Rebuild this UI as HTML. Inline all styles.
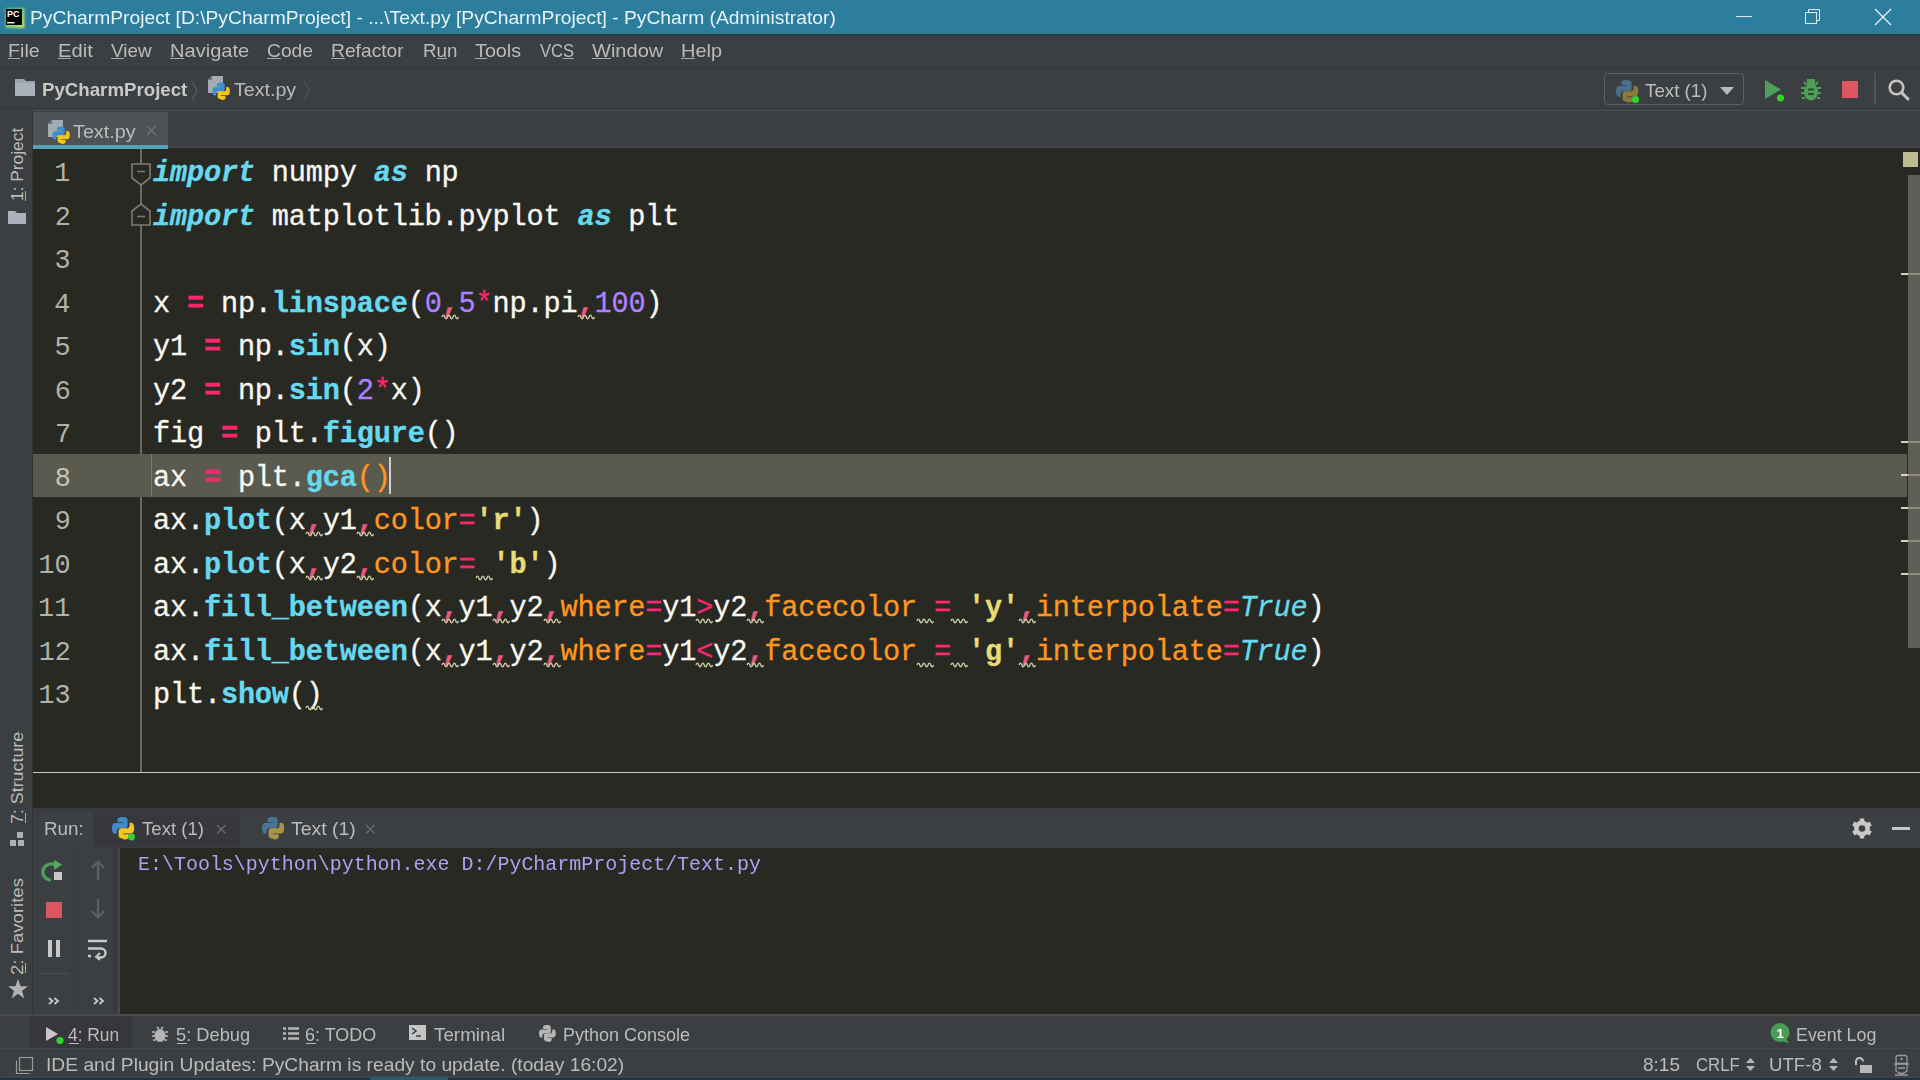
<!DOCTYPE html>
<html><head><meta charset="utf-8">
<style>
*{margin:0;padding:0;box-sizing:border-box}
html,body{width:1920px;height:1080px;overflow:hidden;background:#3c3f41;position:relative}
.a{position:absolute}
.t{white-space:pre;line-height:1;font-family:"Liberation Sans",sans-serif;transform-origin:0 0}
.code{font-family:"Liberation Mono",monospace;font-size:28.6px;color:#f8f8f2;letter-spacing:-0.183px;-webkit-text-stroke:0.3px currentColor}
svg{overflow:visible}
</style></head><body>
<div class="a" style="left:0px;top:0px;width:1920px;height:34px;background:#2d7d9d;"></div>
<div class="a" style="left:0px;top:33px;width:1920px;height:1px;background:#3f7a84;"></div>
<div class="a" style="left:0px;top:34px;width:1920px;height:2px;background:#23414b;"></div>
<div class="a" style="left:0px;top:36px;width:1920px;height:1px;background:#3b4250;"></div>
<div class="a" style="left:0px;top:37px;width:1920px;height:1px;background:#3a3540;"></div>
<div class="a" style="left:0px;top:38px;width:1920px;height:1px;background:#463c46;"></div>
<div class="a" style="left:0px;top:39px;width:1920px;height:1px;background:#3d3a3d;"></div>
<svg class="a" style="left:4px;top:6px" width="22" height="24" viewBox="0 0 22 24"><defs><linearGradient id="pcg" x1="0" y1="0" x2="1" y2="1"><stop offset="0" stop-color="#2fcf8f"/><stop offset="0.45" stop-color="#6fe07a"/><stop offset="1" stop-color="#e8e85a"/></linearGradient><filter id="pcb"><feGaussianBlur stdDeviation="1.1"/></filter></defs><rect x="1.5" y="2" width="19" height="20" fill="url(#pcg)" filter="url(#pcb)" opacity="0.9"/><rect x="2" y="3" width="16" height="16" fill="#000"/><text x="3.1" y="10.6" font-family="Liberation Sans" font-weight="bold" font-size="9" fill="#fff">PC</text><rect x="3" y="16" width="7.5" height="1.4" fill="#fff"/></svg>
<div class="a t" style="left:30.41px;top:9.00px;font-family:'Liberation Sans',sans-serif;font-size:18.5px;font-weight:400;color:#e6f3f9;transform:scaleX(1.0410);">PyCharmProject [D:\PyCharmProject] - ...\Text.py [PyCharmProject] - PyCharm (Administrator)</div>
<div class="a" style="left:1736px;top:16px;width:16px;height:1px;background:#dbe9f0;"></div>
<svg class="a" style="left:1804px;top:8px" width="17" height="17" viewBox="0 0 17 17"><rect x="1.5" y="4.5" width="11" height="11" fill="none" stroke="#dbe9f0" stroke-width="1"/><path d="M4.5 4.5V1.5H15.5V12.5H12.5" fill="none" stroke="#dbe9f0" stroke-width="1"/></svg>
<svg class="a" style="left:1874px;top:8px" width="18" height="18" viewBox="0 0 18 18"><path d="M1 1L17 17M17 1L1 17" stroke="#e6f0f4" stroke-width="1.4"/></svg>
<div class="a" style="left:0px;top:40px;width:1920px;height:27px;background:#3c3f41;"></div>
<div class="a t" style="left:8.38px;top:41.00px;font-family:'Liberation Sans',sans-serif;font-size:19px;font-weight:400;color:#bbbbbb;transform:scaleX(1.0349);">File</div>
<div class="a" style="left:8px;top:58px;width:12px;height:1px;background:#a9a9a9;"></div>
<div class="a t" style="left:58.34px;top:41.00px;font-family:'Liberation Sans',sans-serif;font-size:19px;font-weight:400;color:#bbbbbb;transform:scaleX(1.0607);">Edit</div>
<div class="a" style="left:58px;top:58px;width:13px;height:1px;background:#a9a9a9;"></div>
<div class="a t" style="left:111.16px;top:41.00px;font-family:'Liberation Sans',sans-serif;font-size:19px;font-weight:400;color:#bbbbbb;transform:scaleX(0.9914);">View</div>
<div class="a" style="left:111px;top:58px;width:13px;height:1px;background:#a9a9a9;"></div>
<div class="a t" style="left:169.59px;top:41.00px;font-family:'Liberation Sans',sans-serif;font-size:19px;font-weight:400;color:#bbbbbb;transform:scaleX(1.0561);">Navigate</div>
<div class="a" style="left:170px;top:58px;width:14px;height:1px;background:#a9a9a9;"></div>
<div class="a t" style="left:266.54px;top:41.00px;font-family:'Liberation Sans',sans-serif;font-size:19px;font-weight:400;color:#bbbbbb;transform:scaleX(1.0125);">Code</div>
<div class="a" style="left:267px;top:58px;width:14px;height:1px;background:#a9a9a9;"></div>
<div class="a t" style="left:331.31px;top:41.00px;font-family:'Liberation Sans',sans-serif;font-size:19px;font-weight:400;color:#bbbbbb;transform:scaleX(1.0126);">Refactor</div>
<div class="a" style="left:331px;top:58px;width:14px;height:1px;background:#a9a9a9;"></div>
<div class="a t" style="left:423.05px;top:41.00px;font-family:'Liberation Sans',sans-serif;font-size:19px;font-weight:400;color:#bbbbbb;transform:scaleX(0.9871);">Run</div>
<div class="a" style="left:437px;top:58px;width:10px;height:1px;background:#a9a9a9;"></div>
<div class="a t" style="left:474.56px;top:41.00px;font-family:'Liberation Sans',sans-serif;font-size:19px;font-weight:400;color:#bbbbbb;transform:scaleX(1.0399);">Tools</div>
<div class="a" style="left:475px;top:58px;width:12px;height:1px;background:#a9a9a9;"></div>
<div class="a t" style="left:540.32px;top:41.00px;font-family:'Liberation Sans',sans-serif;font-size:19px;font-weight:400;color:#bbbbbb;transform:scaleX(0.8754);">VCS</div>
<div class="a" style="left:563px;top:58px;width:11px;height:1px;background:#a9a9a9;"></div>
<div class="a t" style="left:592.40px;top:41.00px;font-family:'Liberation Sans',sans-serif;font-size:19px;font-weight:400;color:#bbbbbb;transform:scaleX(1.0549);">Window</div>
<div class="a" style="left:592px;top:58px;width:19px;height:1px;background:#a9a9a9;"></div>
<div class="a t" style="left:680.86px;top:41.00px;font-family:'Liberation Sans',sans-serif;font-size:19px;font-weight:400;color:#bbbbbb;transform:scaleX(1.0485);">Help</div>
<div class="a" style="left:681px;top:58px;width:14px;height:1px;background:#a9a9a9;"></div>
<div class="a" style="left:0px;top:67px;width:1920px;height:43px;background:#3c3f41;"></div>
<div class="a" style="left:0px;top:67px;width:1920px;height:1px;background:#343638;"></div>
<div class="a" style="left:0px;top:107px;width:1920px;height:2px;background:#383a3c;"></div>
<div class="a" style="left:0px;top:110px;width:1920px;height:1px;background:#4b4e51;"></div>
<svg class="a" style="left:15px;top:79px" width="21" height="17" viewBox="0 0 21 17"><path d="M0 0H9L11 2H20V17H0Z" fill="#9aa4ae"/><rect x="0" y="4" width="20" height="13" fill="#a9b2bb"/></svg>
<div class="a t" style="left:41.64px;top:81.00px;font-family:'Liberation Sans',sans-serif;font-size:18.5px;font-weight:700;color:#c9c9c9;transform:scaleX(1.0095);">PyCharmProject</div>
<svg class="a" style="left:191px;top:80px" width="8" height="22" viewBox="0 0 8 22"><path d="M1 1L6 10.5L1 20" fill="none" stroke="#5b5e60" stroke-width="1.3"/></svg>
<svg class="a" style="left:208px;top:76px" width="22" height="24" viewBox="0 0 22 24"><path d="M4 0H15V17H0V4Z" fill="#a3abb3"/><path d="M0 4H4V0Z" fill="#6d7378"/><g transform="translate(4.5 6.5) scale(0.78)"><path d="M11 0C5 0 5.5 2.6 5.5 2.6v2.7h5.6v.8H3.3S0 5.7 0 11.3s2.9 5.4 2.9 5.4h1.7v-2.6s-.1-2.9 2.9-2.9h5.3s2.8 0 2.8-2.7V3.1S16 0 11 0z" fill="#3f8fcf"/><path d="M11.2 22.5c6 0 5.5-2.6 5.5-2.6v-2.7h-5.6v-.8h7.8s3.3.4 3.3-5.2-2.9-5.4-2.9-5.4h-1.7v2.6s.1 2.9-2.9 2.9H9.4s-2.8 0-2.8 2.7v4.4s-.4 3.1 4.6 3.1z" fill="#f2c318"/></g></svg>
<div class="a t" style="left:233.76px;top:81.00px;font-family:'Liberation Sans',sans-serif;font-size:18.5px;font-weight:400;color:#bbbbbb;transform:scaleX(1.0596);">Text.py</div>
<svg class="a" style="left:303px;top:80px" width="8" height="22" viewBox="0 0 8 22"><path d="M1 1L6 10.5L1 20" fill="none" stroke="#4f5254" stroke-width="1.3"/></svg>
<div class="a" style="left:1604px;top:73px;width:140px;height:32px;border:1.5px solid #5d6063;border-radius:4px"></div>
<svg class="a" style="left:1616px;top:80px" width="24" height="24" viewBox="0 0 24 24"><path d="M11 0C5 0 5.5 2.6 5.5 2.6v2.7h5.6v.8H3.3S0 5.7 0 11.3s2.9 5.4 2.9 5.4h1.7v-2.6s-.1-2.9 2.9-2.9h5.3s2.8 0 2.8-2.7V3.1S16 0 11 0z" fill="#4a6f8a"/><path d="M11.2 22.5c6 0 5.5-2.6 5.5-2.6v-2.7h-5.6v-.8h7.8s3.3.4 3.3-5.2-2.9-5.4-2.9-5.4h-1.7v2.6s.1 2.9-2.9 2.9H9.4s-2.8 0-2.8 2.7v4.4s-.4 3.1 4.6 3.1z" fill="#8a7a3a"/><circle cx="19.5" cy="19.5" r="3.6" fill="#2fd42f"/></svg>
<div class="a t" style="left:1645.38px;top:82.00px;font-family:'Liberation Sans',sans-serif;font-size:18.5px;font-weight:400;color:#bbbbbb;transform:scaleX(1.0137);">Text (1)</div>
<svg class="a" style="left:1720px;top:87px" width="14" height="8" viewBox="0 0 14 8"><path d="M0 0H14L7 8Z" fill="#b9b9b9"/></svg>
<svg class="a" style="left:1765px;top:80px" width="20" height="23" viewBox="0 0 20 23"><path d="M0 0L16 9.5L0 19Z" fill="#4f9f59"/><circle cx="15.5" cy="18" r="3.5" fill="#2fd42f"/></svg>
<svg class="a" style="left:1801px;top:80px" width="20" height="21" viewBox="0 0 20 21"><path d="M7 0h6v3h-6z M3 2l3 3 M17 2l-3 3" stroke="#4f9f59" stroke-width="2" fill="#4f9f59"/><ellipse cx="10" cy="12" rx="7" ry="8.5" fill="#4f9f59"/><path d="M0 8H4M16 8H20M0 13H3M17 13H20M1 18H4M16 18H19" stroke="#4f9f59" stroke-width="2"/><path d="M7 9.5H13M7 14H13" stroke="#2d4a31" stroke-width="2"/></svg>
<div class="a" style="left:1842px;top:81px;width:16px;height:17px;background:#db5860;"></div>
<div class="a" style="left:1874px;top:73px;width:2px;height:31px;background:#505356;"></div>
<svg class="a" style="left:1888px;top:79px" width="22" height="22" viewBox="0 0 22 22"><circle cx="8.5" cy="8.5" r="6.8" fill="none" stroke="#c5c5c5" stroke-width="2.6"/><path d="M13.5 13.5L20 20" stroke="#c5c5c5" stroke-width="3" stroke-linecap="round"/></svg>
<div class="a" style="left:0px;top:110px;width:32px;height:904px;background:#3c3f41;"></div>
<div class="a" style="left:32px;top:110px;width:1px;height:904px;background:#313335;"></div>
<div class="a t" style="left:9.45px;top:201.10px;font-size:17px;color:#bbbbbb;transform-origin:0 0;transform:rotate(-90deg) scaleX(1.0196)">1: Project</div>
<div class="a" style="left:25px;top:191px;width:1px;height:10px;background:#a9a9a9;"></div>
<svg class="a" style="left:8px;top:211px" width="18" height="13" viewBox="0 0 18 13"><path d="M0 0H7L9 2H18V13H0Z" fill="#a9b2bb"/></svg>
<div class="a t" style="left:9.45px;top:824.39px;font-size:17px;color:#bbbbbb;transform-origin:0 0;transform:rotate(-90deg) scaleX(1.0490)">7: Structure</div>
<div class="a" style="left:25px;top:813px;width:1px;height:10px;background:#a9a9a9;"></div>
<svg class="a" style="left:10px;top:832px" width="14" height="14" viewBox="0 0 14 14"><rect x="7" y="0" width="6" height="6" fill="#b0b0b0"/><rect x="0" y="8" width="6" height="6" fill="#b0b0b0"/><rect x="8" y="8" width="6" height="6" fill="#b0b0b0"/></svg>
<div class="a t" style="left:9.45px;top:974.93px;font-size:17px;color:#bbbbbb;transform-origin:0 0;transform:rotate(-90deg) scaleX(1.0918)">2: Favorites</div>
<div class="a" style="left:25px;top:963px;width:1px;height:10px;background:#a9a9a9;"></div>
<svg class="a" style="left:8px;top:979px" width="20" height="20" viewBox="0 0 20 20"><path d="M10 0L12.6 7.2H20L14 11.8L16.2 19.5L10 14.8L3.8 19.5L6 11.8L0 7.2H7.4Z" fill="#b3b3b3"/></svg>
<div class="a" style="left:33px;top:111px;width:1887px;height:38px;background:#3c3f41;"></div>
<div class="a" style="left:33px;top:112px;width:135px;height:33px;background:#4e5254;"></div>
<div class="a" style="left:33px;top:145px;width:135px;height:4px;background:#52a3b6;"></div>
<div class="a" style="left:168px;top:146px;width:1752px;height:2px;background:#464646;"></div>
<div class="a" style="left:168px;top:148px;width:1752px;height:1px;background:#2c2c2c;"></div>
<svg class="a" style="left:48px;top:120px" width="22" height="24" viewBox="0 0 22 24"><path d="M4 0H15V17H0V4Z" fill="#a3abb3"/><path d="M0 4H4V0Z" fill="#6d7378"/><g transform="translate(4.5 6.5) scale(0.78)"><path d="M11 0C5 0 5.5 2.6 5.5 2.6v2.7h5.6v.8H3.3S0 5.7 0 11.3s2.9 5.4 2.9 5.4h1.7v-2.6s-.1-2.9 2.9-2.9h5.3s2.8 0 2.8-2.7V3.1S16 0 11 0z" fill="#3f8fcf"/><path d="M11.2 22.5c6 0 5.5-2.6 5.5-2.6v-2.7h-5.6v-.8h7.8s3.3.4 3.3-5.2-2.9-5.4-2.9-5.4h-1.7v2.6s.1 2.9-2.9 2.9H9.4s-2.8 0-2.8 2.7v4.4s-.4 3.1 4.6 3.1z" fill="#f2c318"/></g></svg>
<div class="a t" style="left:72.96px;top:123.00px;font-family:'Liberation Sans',sans-serif;font-size:18.5px;font-weight:400;color:#bbbbbb;transform:scaleX(1.0682);">Text.py</div>
<svg class="a" style="left:146px;top:125px" width="11" height="11" viewBox="0 0 11 11"><path d="M1 1L10 10M10 1L1 10" stroke="#707375" stroke-width="1.4"/></svg>
<div class="a" style="left:33px;top:149px;width:1887px;height:623px;background:#282923;"></div>
<div class="a" style="left:33px;top:454px;width:1874px;height:43px;background:#5a5a4f;"></div>
<div class="a" style="left:140px;top:149px;width:2px;height:305px;background:#6b6a62;"></div>
<div class="a" style="left:140px;top:497px;width:2px;height:275px;background:#6b6a62;"></div>
<div class="a" style="left:151px;top:454px;width:1px;height:43px;background:#7a7a6e;"></div>
<div class="a" style="left:1903px;top:152px;width:15px;height:15px;background:#bdbb8f;"></div>
<div class="a" style="left:1908px;top:175px;width:12px;height:473px;background:#5f5f58;"></div>
<div class="a" style="left:1901px;top:273px;width:7px;height:2px;background:#d6d4bc;"></div>
<div class="a" style="left:1908px;top:273px;width:12px;height:2px;background:#8c8b7c;"></div>
<div class="a" style="left:1901px;top:441px;width:7px;height:2px;background:#d6d4bc;"></div>
<div class="a" style="left:1908px;top:441px;width:12px;height:2px;background:#8c8b7c;"></div>
<div class="a" style="left:1901px;top:474px;width:7px;height:2px;background:#d6d4bc;"></div>
<div class="a" style="left:1908px;top:474px;width:12px;height:2px;background:#8c8b7c;"></div>
<div class="a" style="left:1901px;top:507px;width:7px;height:2px;background:#d6d4bc;"></div>
<div class="a" style="left:1908px;top:507px;width:12px;height:2px;background:#8c8b7c;"></div>
<div class="a" style="left:1901px;top:540px;width:7px;height:2px;background:#d6d4bc;"></div>
<div class="a" style="left:1908px;top:540px;width:12px;height:2px;background:#8c8b7c;"></div>
<div class="a" style="left:1901px;top:573px;width:7px;height:2px;background:#d6d4bc;"></div>
<div class="a" style="left:1908px;top:573px;width:12px;height:2px;background:#8c8b7c;"></div>
<svg class="a" style="left:131px;top:163px" width="20" height="24" viewBox="0 0 20 24"><path d="M1 1H19V15L10 22L1 15Z" fill="#282923" stroke="#7c7a72" stroke-width="1.6"/><path d="M6 8.5H14" stroke="#7c7a72" stroke-width="1.6"/></svg>
<svg class="a" style="left:131px;top:203px" width="20" height="24" viewBox="0 0 20 24"><path d="M1 8L10 1L19 8V22H1Z" fill="#282923" stroke="#7c7a72" stroke-width="1.6"/><path d="M6 13.5H14" stroke="#7c7a72" stroke-width="1.6"/></svg>
<div class="a t" style="left:54.19px;top:161.00px;font-family:'Liberation Mono',monospace;font-size:26.8px;font-weight:400;color:#b2b2aa;">1</div>
<div class="a t" style="left:54.80px;top:205.00px;font-family:'Liberation Mono',monospace;font-size:26.8px;font-weight:400;color:#b2b2aa;">2</div>
<div class="a t" style="left:54.59px;top:248.00px;font-family:'Liberation Mono',monospace;font-size:26.8px;font-weight:400;color:#b2b2aa;">3</div>
<div class="a t" style="left:54.26px;top:292.00px;font-family:'Liberation Mono',monospace;font-size:26.8px;font-weight:400;color:#b2b2aa;">4</div>
<div class="a t" style="left:54.59px;top:335.00px;font-family:'Liberation Mono',monospace;font-size:26.8px;font-weight:400;color:#b2b2aa;">5</div>
<div class="a t" style="left:54.66px;top:379.00px;font-family:'Liberation Mono',monospace;font-size:26.8px;font-weight:400;color:#b2b2aa;">6</div>
<div class="a t" style="left:55.00px;top:422.00px;font-family:'Liberation Mono',monospace;font-size:26.8px;font-weight:400;color:#b2b2aa;">7</div>
<div class="a t" style="left:54.66px;top:466.00px;font-family:'Liberation Mono',monospace;font-size:26.8px;font-weight:400;color:#c6c6ba;">8</div>
<div class="a t" style="left:54.80px;top:509.00px;font-family:'Liberation Mono',monospace;font-size:26.8px;font-weight:400;color:#b2b2aa;">9</div>
<div class="a t" style="left:38.52px;top:553.00px;font-family:'Liberation Mono',monospace;font-size:26.8px;font-weight:400;color:#b2b2aa;">10</div>
<div class="a t" style="left:38.11px;top:596.00px;font-family:'Liberation Mono',monospace;font-size:26.8px;font-weight:400;color:#b2b2aa;">11</div>
<div class="a t" style="left:38.72px;top:640.00px;font-family:'Liberation Mono',monospace;font-size:26.8px;font-weight:400;color:#b2b2aa;">12</div>
<div class="a t" style="left:38.52px;top:683.00px;font-family:'Liberation Mono',monospace;font-size:26.8px;font-weight:400;color:#b2b2aa;">13</div>
<div class="a t code" style="left:153px;top:160.00px"><span style="color:#66d9ef;font-weight:700;font-style:italic;">import</span> numpy <span style="color:#66d9ef;font-weight:700;font-style:italic;">as</span> np</div>
<div class="a t code" style="left:153px;top:204.00px"><span style="color:#66d9ef;font-weight:700;font-style:italic;">import</span> matplotlib.pyplot <span style="color:#66d9ef;font-weight:700;font-style:italic;">as</span> plt</div>
<div class="a t code" style="left:153px;top:291.00px">x <span style="color:#f92672;font-weight:700;">=</span> np.<span style="color:#66d9ef;font-weight:700;">linspace</span>(<span style="color:#ae81ff;">0</span><span style="color:#e9587f;font-weight:700;">,</span><span style="color:#ae81ff;">5</span><span style="color:#f92672;">*</span>np.pi<span style="color:#e9587f;font-weight:700;">,</span><span style="color:#ae81ff;">100</span>)</div>
<div class="a t code" style="left:153px;top:334.00px">y1 <span style="color:#f92672;font-weight:700;">=</span> np.<span style="color:#66d9ef;font-weight:700;">sin</span>(x)</div>
<div class="a t code" style="left:153px;top:378.00px">y2 <span style="color:#f92672;font-weight:700;">=</span> np.<span style="color:#66d9ef;font-weight:700;">sin</span>(<span style="color:#ae81ff;">2</span><span style="color:#f92672;">*</span>x)</div>
<div class="a t code" style="left:153px;top:421.00px">fig <span style="color:#f92672;font-weight:700;">=</span> plt.<span style="color:#66d9ef;font-weight:700;">figure</span>()</div>
<div class="a t code" style="left:153px;top:465.00px">ax <span style="color:#f92672;font-weight:700;">=</span> plt.<span style="color:#66d9ef;font-weight:700;">gca</span><span style="color:#fd971f;">()</span></div>
<div class="a t code" style="left:153px;top:508.00px">ax.<span style="color:#66d9ef;font-weight:700;">plot</span>(x<span style="color:#e9587f;font-weight:700;">,</span>y1<span style="color:#e9587f;font-weight:700;">,</span><span style="color:#fd971f;">color</span><span style="color:#f92672;">=</span><span style="color:#e6db74;font-weight:700;">&#x27;r&#x27;</span>)</div>
<div class="a t code" style="left:153px;top:552.00px">ax.<span style="color:#66d9ef;font-weight:700;">plot</span>(x<span style="color:#e9587f;font-weight:700;">,</span>y2<span style="color:#e9587f;font-weight:700;">,</span><span style="color:#fd971f;">color</span><span style="color:#f92672;">=</span> <span style="color:#e6db74;font-weight:700;">&#x27;b&#x27;</span>)</div>
<div class="a t code" style="left:153px;top:595.00px">ax.<span style="color:#66d9ef;font-weight:700;">fill_between</span>(x<span style="color:#e9587f;font-weight:700;">,</span>y1<span style="color:#e9587f;font-weight:700;">,</span>y2<span style="color:#e9587f;font-weight:700;">,</span><span style="color:#fd971f;">where</span><span style="color:#f92672;">=</span>y1<span style="color:#f92672;">&gt;</span>y2<span style="color:#e9587f;font-weight:700;">,</span><span style="color:#fd971f;">facecolor</span> <span style="color:#f92672;">=</span> <span style="color:#e6db74;font-weight:700;">&#x27;y&#x27;</span><span style="color:#e9587f;font-weight:700;">,</span><span style="color:#fd971f;">interpolate</span><span style="color:#f92672;">=</span><span style="color:#66d9ef;font-style:italic;">True</span>)</div>
<div class="a t code" style="left:153px;top:639.00px">ax.<span style="color:#66d9ef;font-weight:700;">fill_between</span>(x<span style="color:#e9587f;font-weight:700;">,</span>y1<span style="color:#e9587f;font-weight:700;">,</span>y2<span style="color:#e9587f;font-weight:700;">,</span><span style="color:#fd971f;">where</span><span style="color:#f92672;">=</span>y1<span style="color:#f92672;">&lt;</span>y2<span style="color:#e9587f;font-weight:700;">,</span><span style="color:#fd971f;">facecolor</span> <span style="color:#f92672;">=</span> <span style="color:#e6db74;font-weight:700;">&#x27;g&#x27;</span><span style="color:#e9587f;font-weight:700;">,</span><span style="color:#fd971f;">interpolate</span><span style="color:#f92672;">=</span><span style="color:#66d9ef;font-style:italic;">True</span>)</div>
<div class="a t code" style="left:153px;top:682.00px">plt.<span style="color:#66d9ef;font-weight:700;">show</span>()</div>
<svg class="a" style="left:442px;top:314px" width="18" height="6" viewBox="0 0 18 6"><path d="M0 3 Q1.38 -0.8 2.75 3 Q4.12 6.8 5.50 3 Q6.88 -0.8 8.25 3 Q9.62 6.8 11.00 3 Q12.38 -0.8 13.75 3 Q15.12 6.8 16.50 3" fill="none" stroke="#cfcca8" stroke-width="1.4"/></svg>
<svg class="a" style="left:578px;top:314px" width="18" height="6" viewBox="0 0 18 6"><path d="M0 3 Q1.38 -0.8 2.75 3 Q4.12 6.8 5.50 3 Q6.88 -0.8 8.25 3 Q9.62 6.8 11.00 3 Q12.38 -0.8 13.75 3 Q15.12 6.8 16.50 3" fill="none" stroke="#cfcca8" stroke-width="1.4"/></svg>
<svg class="a" style="left:306px;top:531px" width="18" height="6" viewBox="0 0 18 6"><path d="M0 3 Q1.38 -0.8 2.75 3 Q4.12 6.8 5.50 3 Q6.88 -0.8 8.25 3 Q9.62 6.8 11.00 3 Q12.38 -0.8 13.75 3 Q15.12 6.8 16.50 3" fill="none" stroke="#cfcca8" stroke-width="1.4"/></svg>
<svg class="a" style="left:357px;top:531px" width="18" height="6" viewBox="0 0 18 6"><path d="M0 3 Q1.38 -0.8 2.75 3 Q4.12 6.8 5.50 3 Q6.88 -0.8 8.25 3 Q9.62 6.8 11.00 3 Q12.38 -0.8 13.75 3 Q15.12 6.8 16.50 3" fill="none" stroke="#cfcca8" stroke-width="1.4"/></svg>
<svg class="a" style="left:306px;top:575px" width="18" height="6" viewBox="0 0 18 6"><path d="M0 3 Q1.38 -0.8 2.75 3 Q4.12 6.8 5.50 3 Q6.88 -0.8 8.25 3 Q9.62 6.8 11.00 3 Q12.38 -0.8 13.75 3 Q15.12 6.8 16.50 3" fill="none" stroke="#cfcca8" stroke-width="1.4"/></svg>
<svg class="a" style="left:357px;top:575px" width="18" height="6" viewBox="0 0 18 6"><path d="M0 3 Q1.38 -0.8 2.75 3 Q4.12 6.8 5.50 3 Q6.88 -0.8 8.25 3 Q9.62 6.8 11.00 3 Q12.38 -0.8 13.75 3 Q15.12 6.8 16.50 3" fill="none" stroke="#cfcca8" stroke-width="1.4"/></svg>
<svg class="a" style="left:442px;top:618px" width="18" height="6" viewBox="0 0 18 6"><path d="M0 3 Q1.38 -0.8 2.75 3 Q4.12 6.8 5.50 3 Q6.88 -0.8 8.25 3 Q9.62 6.8 11.00 3 Q12.38 -0.8 13.75 3 Q15.12 6.8 16.50 3" fill="none" stroke="#cfcca8" stroke-width="1.4"/></svg>
<svg class="a" style="left:493px;top:618px" width="18" height="6" viewBox="0 0 18 6"><path d="M0 3 Q1.38 -0.8 2.75 3 Q4.12 6.8 5.50 3 Q6.88 -0.8 8.25 3 Q9.62 6.8 11.00 3 Q12.38 -0.8 13.75 3 Q15.12 6.8 16.50 3" fill="none" stroke="#cfcca8" stroke-width="1.4"/></svg>
<svg class="a" style="left:544px;top:618px" width="18" height="6" viewBox="0 0 18 6"><path d="M0 3 Q1.38 -0.8 2.75 3 Q4.12 6.8 5.50 3 Q6.88 -0.8 8.25 3 Q9.62 6.8 11.00 3 Q12.38 -0.8 13.75 3 Q15.12 6.8 16.50 3" fill="none" stroke="#cfcca8" stroke-width="1.4"/></svg>
<svg class="a" style="left:747px;top:618px" width="18" height="6" viewBox="0 0 18 6"><path d="M0 3 Q1.38 -0.8 2.75 3 Q4.12 6.8 5.50 3 Q6.88 -0.8 8.25 3 Q9.62 6.8 11.00 3 Q12.38 -0.8 13.75 3 Q15.12 6.8 16.50 3" fill="none" stroke="#cfcca8" stroke-width="1.4"/></svg>
<svg class="a" style="left:1019px;top:618px" width="18" height="6" viewBox="0 0 18 6"><path d="M0 3 Q1.38 -0.8 2.75 3 Q4.12 6.8 5.50 3 Q6.88 -0.8 8.25 3 Q9.62 6.8 11.00 3 Q12.38 -0.8 13.75 3 Q15.12 6.8 16.50 3" fill="none" stroke="#cfcca8" stroke-width="1.4"/></svg>
<svg class="a" style="left:442px;top:662px" width="18" height="6" viewBox="0 0 18 6"><path d="M0 3 Q1.38 -0.8 2.75 3 Q4.12 6.8 5.50 3 Q6.88 -0.8 8.25 3 Q9.62 6.8 11.00 3 Q12.38 -0.8 13.75 3 Q15.12 6.8 16.50 3" fill="none" stroke="#cfcca8" stroke-width="1.4"/></svg>
<svg class="a" style="left:493px;top:662px" width="18" height="6" viewBox="0 0 18 6"><path d="M0 3 Q1.38 -0.8 2.75 3 Q4.12 6.8 5.50 3 Q6.88 -0.8 8.25 3 Q9.62 6.8 11.00 3 Q12.38 -0.8 13.75 3 Q15.12 6.8 16.50 3" fill="none" stroke="#cfcca8" stroke-width="1.4"/></svg>
<svg class="a" style="left:544px;top:662px" width="18" height="6" viewBox="0 0 18 6"><path d="M0 3 Q1.38 -0.8 2.75 3 Q4.12 6.8 5.50 3 Q6.88 -0.8 8.25 3 Q9.62 6.8 11.00 3 Q12.38 -0.8 13.75 3 Q15.12 6.8 16.50 3" fill="none" stroke="#cfcca8" stroke-width="1.4"/></svg>
<svg class="a" style="left:747px;top:662px" width="18" height="6" viewBox="0 0 18 6"><path d="M0 3 Q1.38 -0.8 2.75 3 Q4.12 6.8 5.50 3 Q6.88 -0.8 8.25 3 Q9.62 6.8 11.00 3 Q12.38 -0.8 13.75 3 Q15.12 6.8 16.50 3" fill="none" stroke="#cfcca8" stroke-width="1.4"/></svg>
<svg class="a" style="left:1019px;top:662px" width="18" height="6" viewBox="0 0 18 6"><path d="M0 3 Q1.38 -0.8 2.75 3 Q4.12 6.8 5.50 3 Q6.88 -0.8 8.25 3 Q9.62 6.8 11.00 3 Q12.38 -0.8 13.75 3 Q15.12 6.8 16.50 3" fill="none" stroke="#cfcca8" stroke-width="1.4"/></svg>
<svg class="a" style="left:476px;top:575px" width="18" height="6" viewBox="0 0 18 6"><path d="M0 3 Q1.38 -0.8 2.75 3 Q4.12 6.8 5.50 3 Q6.88 -0.8 8.25 3 Q9.62 6.8 11.00 3 Q12.38 -0.8 13.75 3 Q15.12 6.8 16.50 3" fill="none" stroke="#cfcca8" stroke-width="1.4"/></svg>
<svg class="a" style="left:696px;top:618px" width="18" height="6" viewBox="0 0 18 6"><path d="M0 3 Q1.38 -0.8 2.75 3 Q4.12 6.8 5.50 3 Q6.88 -0.8 8.25 3 Q9.62 6.8 11.00 3 Q12.38 -0.8 13.75 3 Q15.12 6.8 16.50 3" fill="none" stroke="#cfcca8" stroke-width="1.4"/></svg>
<svg class="a" style="left:917px;top:618px" width="18" height="6" viewBox="0 0 18 6"><path d="M0 3 Q1.38 -0.8 2.75 3 Q4.12 6.8 5.50 3 Q6.88 -0.8 8.25 3 Q9.62 6.8 11.00 3 Q12.38 -0.8 13.75 3 Q15.12 6.8 16.50 3" fill="none" stroke="#cfcca8" stroke-width="1.4"/></svg>
<svg class="a" style="left:951px;top:618px" width="18" height="6" viewBox="0 0 18 6"><path d="M0 3 Q1.38 -0.8 2.75 3 Q4.12 6.8 5.50 3 Q6.88 -0.8 8.25 3 Q9.62 6.8 11.00 3 Q12.38 -0.8 13.75 3 Q15.12 6.8 16.50 3" fill="none" stroke="#cfcca8" stroke-width="1.4"/></svg>
<svg class="a" style="left:696px;top:662px" width="18" height="6" viewBox="0 0 18 6"><path d="M0 3 Q1.38 -0.8 2.75 3 Q4.12 6.8 5.50 3 Q6.88 -0.8 8.25 3 Q9.62 6.8 11.00 3 Q12.38 -0.8 13.75 3 Q15.12 6.8 16.50 3" fill="none" stroke="#cfcca8" stroke-width="1.4"/></svg>
<svg class="a" style="left:917px;top:662px" width="18" height="6" viewBox="0 0 18 6"><path d="M0 3 Q1.38 -0.8 2.75 3 Q4.12 6.8 5.50 3 Q6.88 -0.8 8.25 3 Q9.62 6.8 11.00 3 Q12.38 -0.8 13.75 3 Q15.12 6.8 16.50 3" fill="none" stroke="#cfcca8" stroke-width="1.4"/></svg>
<svg class="a" style="left:951px;top:662px" width="18" height="6" viewBox="0 0 18 6"><path d="M0 3 Q1.38 -0.8 2.75 3 Q4.12 6.8 5.50 3 Q6.88 -0.8 8.25 3 Q9.62 6.8 11.00 3 Q12.38 -0.8 13.75 3 Q15.12 6.8 16.50 3" fill="none" stroke="#cfcca8" stroke-width="1.4"/></svg>
<svg class="a" style="left:306px;top:705px" width="18" height="6" viewBox="0 0 18 6"><path d="M0 3 Q1.38 -0.8 2.75 3 Q4.12 6.8 5.50 3 Q6.88 -0.8 8.25 3 Q9.62 6.8 11.00 3 Q12.38 -0.8 13.75 3 Q15.12 6.8 16.50 3" fill="none" stroke="#cfcca8" stroke-width="1.4"/></svg>
<div class="a" style="left:389px;top:457px;width:2px;height:37px;background:#d0d0c8;"></div>
<div class="a" style="left:33px;top:772px;width:1887px;height:1px;background:#c9c9c0;"></div>
<div class="a" style="left:33px;top:773px;width:1887px;height:35px;background:#282923;"></div>
<div class="a" style="left:33px;top:808px;width:1887px;height:40px;background:#3c3f41;"></div>
<div class="a" style="left:33px;top:808px;width:1887px;height:7px;background:#393b3e;"></div>
<div class="a" style="left:39px;top:813px;width:54px;height:33px;background:#3e4143;"></div>
<div class="a" style="left:94px;top:815px;width:146px;height:32px;background:#36383b;"></div>
<div class="a t" style="left:44.05px;top:820.00px;font-family:'Liberation Sans',sans-serif;font-size:18.5px;font-weight:400;color:#bbbbbb;transform:scaleX(1.0142);">Run:</div>
<svg class="a" style="left:112px;top:817px" width="24" height="24" viewBox="0 0 24 24"><path d="M11 0C5 0 5.5 2.6 5.5 2.6v2.7h5.6v.8H3.3S0 5.7 0 11.3s2.9 5.4 2.9 5.4h1.7v-2.6s-.1-2.9 2.9-2.9h5.3s2.8 0 2.8-2.7V3.1S16 0 11 0z" fill="#3f8bc9"/><path d="M11.2 22.5c6 0 5.5-2.6 5.5-2.6v-2.7h-5.6v-.8h7.8s3.3.4 3.3-5.2-2.9-5.4-2.9-5.4h-1.7v2.6s.1 2.9-2.9 2.9H9.4s-2.8 0-2.8 2.7v4.4s-.4 3.1 4.6 3.1z" fill="#f3c623"/><circle cx="19.5" cy="20" r="3.4" fill="#2fd42f"/></svg>
<div class="a t" style="left:142.08px;top:820.00px;font-family:'Liberation Sans',sans-serif;font-size:18.5px;font-weight:400;color:#bbbbbb;transform:scaleX(1.0053);">Text (1)</div>
<svg class="a" style="left:216px;top:824px" width="11" height="11" viewBox="0 0 11 11"><path d="M1 1L9.5 9.5M9.5 1L1 9.5" stroke="#6c6f71" stroke-width="1.3"/></svg>
<svg class="a" style="left:262px;top:817px" width="24" height="24" viewBox="0 0 24 24"><path d="M11 0C5 0 5.5 2.6 5.5 2.6v2.7h5.6v.8H3.3S0 5.7 0 11.3s2.9 5.4 2.9 5.4h1.7v-2.6s-.1-2.9 2.9-2.9h5.3s2.8 0 2.8-2.7V3.1S16 0 11 0z" fill="#4a7396"/><path d="M11.2 22.5c6 0 5.5-2.6 5.5-2.6v-2.7h-5.6v-.8h7.8s3.3.4 3.3-5.2-2.9-5.4-2.9-5.4h-1.7v2.6s.1 2.9-2.9 2.9H9.4s-2.8 0-2.8 2.7v4.4s-.4 3.1 4.6 3.1z" fill="#a89545"/></svg>
<div class="a t" style="left:290.56px;top:820.00px;font-family:'Liberation Sans',sans-serif;font-size:18.5px;font-weight:400;color:#bbbbbb;transform:scaleX(1.0486);">Text (1)</div>
<svg class="a" style="left:365px;top:824px" width="11" height="11" viewBox="0 0 11 11"><path d="M1 1L9.5 9.5M9.5 1L1 9.5" stroke="#6c6f71" stroke-width="1.3"/></svg>
<svg class="a" style="left:1852px;top:818px" width="20" height="21" viewBox="0 0 20 21"><g transform="translate(10 10.5)"><circle r="5.6" fill="none" stroke="#c8c8c8" stroke-width="4.6"/><rect x="-2.2" y="-10" width="4.4" height="5" fill="#c8c8c8" transform="rotate(0)"/><rect x="-2.2" y="-10" width="4.4" height="5" fill="#c8c8c8" transform="rotate(60)"/><rect x="-2.2" y="-10" width="4.4" height="5" fill="#c8c8c8" transform="rotate(120)"/><rect x="-2.2" y="-10" width="4.4" height="5" fill="#c8c8c8" transform="rotate(180)"/><rect x="-2.2" y="-10" width="4.4" height="5" fill="#c8c8c8" transform="rotate(240)"/><rect x="-2.2" y="-10" width="4.4" height="5" fill="#c8c8c8" transform="rotate(300)"/></g></svg>
<div class="a" style="left:1892px;top:827px;width:18px;height:3px;background:#c5c5c5;"></div>
<div class="a" style="left:33px;top:848px;width:87px;height:166px;background:#3c3f41;"></div>
<div class="a" style="left:77px;top:848px;width:1px;height:166px;background:#393b3d;"></div>
<div class="a" style="left:113px;top:848px;width:4px;height:166px;background:#37393b;"></div>
<div class="a" style="left:119px;top:848px;width:1px;height:166px;background:#4a4d4f;"></div>
<div class="a" style="left:120px;top:848px;width:1800px;height:166px;background:#282923;"></div>
<div class="a t" style="left:138.40px;top:855.00px;font-family:'Liberation Mono',monospace;font-size:19.9px;font-weight:400;color:#aba2f2;transform:scaleX(1.0037);">E:\Tools\python\python.exe D:/PyCharmProject/Text.py</div>
<svg class="a" style="left:42px;top:859px" width="22" height="22" viewBox="0 0 22 22"><path d="M9 21A8 8 0 1 1 13.5 6.5" fill="none" stroke="#4f9f59" stroke-width="3.2"/><path d="M12 1L20 5.5L12 11Z" fill="#59a869"/><rect x="12" y="13" width="8" height="8" fill="#c8c8c8"/></svg>
<div class="a" style="left:46px;top:902px;width:16px;height:16px;background:#db5860;"></div>
<svg class="a" style="left:91px;top:860px" width="14" height="20" viewBox="0 0 14 20"><path d="M7 20V3M1 8L7 1.5L13 8" fill="none" stroke="#5b5f62" stroke-width="2.5"/></svg>
<svg class="a" style="left:91px;top:899px" width="14" height="20" viewBox="0 0 14 20"><path d="M7 0V17M1 12L7 18.5L13 12" fill="none" stroke="#5b5f62" stroke-width="2.5"/></svg>
<div class="a" style="left:48px;top:940px;width:4px;height:17px;background:#c8c8c8;"></div>
<div class="a" style="left:56px;top:940px;width:4px;height:17px;background:#c8c8c8;"></div>
<div class="a" style="left:39px;top:973px;width:30px;height:1px;background:#4d5052;"></div>
<svg class="a" style="left:48px;top:997px" width="12" height="8" viewBox="0 0 12 8"><path d="M1 1L4.5 4L1 7M6.5 1L10 4L6.5 7" fill="none" stroke="#c8c8c8" stroke-width="1.8"/></svg>
<svg class="a" style="left:88px;top:939px" width="20" height="22" viewBox="0 0 20 22"><path d="M0 2H19M0 9.5H13a4.5 4.5 0 0 1 0 9H10M0 17H3" fill="none" stroke="#c8c8c8" stroke-width="2.4"/><path d="M12 14L8 18L12 21" fill="none" stroke="#c8c8c8" stroke-width="2"/></svg>
<svg class="a" style="left:93px;top:997px" width="12" height="8" viewBox="0 0 12 8"><path d="M1 1L4.5 4L1 7M6.5 1L10 4L6.5 7" fill="none" stroke="#c8c8c8" stroke-width="1.8"/></svg>
<div class="a" style="left:0px;top:1014px;width:1920px;height:34px;background:#3c3f41;"></div>
<div class="a" style="left:0px;top:1014px;width:1920px;height:2px;background:#4a4a4b;"></div>
<div class="a" style="left:0px;top:1016px;width:1920px;height:4px;background:#3e3d42;"></div>
<div class="a" style="left:29px;top:1016px;width:103px;height:32px;background:#35373a;"></div>
<svg class="a" style="left:46px;top:1027px" width="19" height="18" viewBox="0 0 19 18"><path d="M0 0L12 7L0 14Z" fill="#cfc3cb"/><circle cx="14" cy="13.5" r="3.6" fill="#2fd42f"/></svg>
<div class="a t" style="left:68.11px;top:1026.00px;font-family:'Liberation Sans',sans-serif;font-size:18.5px;font-weight:400;color:#bbbbbb;transform:scaleX(0.9393);">4: Run</div>
<div class="a" style="left:69px;top:1043px;width:10px;height:1px;background:#bbbbbb;"></div>
<svg class="a" style="left:152px;top:1027px" width="16" height="16" viewBox="0 0 16 16"><ellipse cx="8" cy="8.5" rx="5.5" ry="6.5" fill="#b5b5b5"/><path d="M0 5H3M13 5H16M0 9H3M13 9H16M1 13H4M12 13H15M5 0L7 2M11 0L9 2" stroke="#b5b5b5" stroke-width="1.6"/></svg>
<div class="a t" style="left:175.57px;top:1026.00px;font-family:'Liberation Sans',sans-serif;font-size:18.5px;font-weight:400;color:#bbbbbb;transform:scaleX(0.9881);">5: Debug</div>
<div class="a" style="left:177px;top:1043px;width:10px;height:1px;background:#bbbbbb;"></div>
<svg class="a" style="left:283px;top:1027px" width="16" height="13" viewBox="0 0 16 13"><path d="M0 1.5H3M5 1.5H16M0 6.5H3M5 6.5H16M0 11.5H3M5 11.5H16" stroke="#b5b5b5" stroke-width="2.4"/></svg>
<div class="a t" style="left:304.90px;top:1026.00px;font-family:'Liberation Sans',sans-serif;font-size:18.5px;font-weight:400;color:#bbbbbb;transform:scaleX(0.9700);">6: TODO</div>
<div class="a" style="left:306px;top:1043px;width:10px;height:1px;background:#bbbbbb;"></div>
<svg class="a" style="left:409px;top:1025px" width="17" height="15" viewBox="0 0 17 15"><rect x="0" y="0" width="17" height="15" fill="#c5c5c5"/><path d="M3 3L7 6L3 9" fill="none" stroke="#3c3f41" stroke-width="1.5"/><path d="M7 11H12" stroke="#3c3f41" stroke-width="1.5"/></svg>
<div class="a t" style="left:433.98px;top:1026.00px;font-family:'Liberation Sans',sans-serif;font-size:18.5px;font-weight:400;color:#bbbbbb;transform:scaleX(1.0166);">Terminal</div>
<svg class="a" style="left:539px;top:1025px" width="17" height="17" viewBox="0 0 22.5 22.5"><path d="M11 0C5 0 5.5 2.6 5.5 2.6v2.7h5.6v.8H3.3S0 5.7 0 11.3s2.9 5.4 2.9 5.4h1.7v-2.6s-.1-2.9 2.9-2.9h5.3s2.8 0 2.8-2.7V3.1S16 0 11 0z" fill="#b5b5b5"/><path d="M11.2 22.5c6 0 5.5-2.6 5.5-2.6v-2.7h-5.6v-.8h7.8s3.3.4 3.3-5.2-2.9-5.4-2.9-5.4h-1.7v2.6s.1 2.9-2.9 2.9H9.4s-2.8 0-2.8 2.7v4.4s-.4 3.1 4.6 3.1z" fill="#b5b5b5"/></svg>
<div class="a t" style="left:563.32px;top:1026.00px;font-family:'Liberation Sans',sans-serif;font-size:18.5px;font-weight:400;color:#bbbbbb;transform:scaleX(0.9727);">Python Console</div>
<svg class="a" style="left:1770px;top:1023px" width="21" height="21" viewBox="0 0 21 21"><circle cx="10" cy="9.5" r="9.5" fill="#499c54"/><path d="M16 15L19 20L11 18Z" fill="#499c54"/><text x="6.6" y="14.5" font-family="Liberation Sans" font-weight="bold" font-size="13" fill="#fff">1</text></svg>
<div class="a t" style="left:1795.53px;top:1026.00px;font-family:'Liberation Sans',sans-serif;font-size:18.5px;font-weight:400;color:#bbbbbb;transform:scaleX(0.9639);">Event Log</div>
<div class="a" style="left:0px;top:1048px;width:1920px;height:32px;background:#3c3f41;"></div>
<div class="a" style="left:0px;top:1048px;width:1920px;height:1px;background:#45484a;"></div>
<div class="a" style="left:0px;top:1076px;width:1920px;height:2px;background:#3a4550;"></div>
<div class="a" style="left:0px;top:1078px;width:1920px;height:2px;background:#24303a;"></div>
<div class="a" style="left:370px;top:1077px;width:78px;height:3px;background:#2b5a6a;"></div>
<svg class="a" style="left:15px;top:1057px" width="19" height="18" viewBox="0 0 19 18"><rect x="4.5" y="0.5" width="13" height="13" fill="none" stroke="#9a9a9a" stroke-width="1.2"/><path d="M1.5 3.5V16.5H14.5" fill="none" stroke="#9a9a9a" stroke-width="1.2"/></svg>
<div class="a t" style="left:46.02px;top:1056.00px;font-family:'Liberation Sans',sans-serif;font-size:18.5px;font-weight:400;color:#bbbbbb;transform:scaleX(1.0393);">IDE and Plugin Updates: PyCharm is ready to update. (today 16:02)</div>
<div class="a t" style="left:1642.79px;top:1056.00px;font-family:'Liberation Sans',sans-serif;font-size:18.5px;font-weight:400;color:#bbbbbb;transform:scaleX(1.0274);">8:15</div>
<div class="a t" style="left:1696.36px;top:1056.00px;font-family:'Liberation Sans',sans-serif;font-size:18.5px;font-weight:400;color:#bbbbbb;transform:scaleX(0.9073);">CRLF</div>
<svg class="a" style="left:1746px;top:1058px" width="9" height="13" viewBox="0 0 9 13"><path d="M0 5L4.5 0L9 5Z M0 8L4.5 13L9 8Z" fill="#b5b5b5"/></svg>
<div class="a t" style="left:1769.06px;top:1056.00px;font-family:'Liberation Sans',sans-serif;font-size:18.5px;font-weight:400;color:#bbbbbb;transform:scaleX(1.0064);">UTF-8</div>
<svg class="a" style="left:1829px;top:1058px" width="9" height="13" viewBox="0 0 9 13"><path d="M0 5L4.5 0L9 5Z M0 8L4.5 13L9 8Z" fill="#b5b5b5"/></svg>
<svg class="a" style="left:1854px;top:1057px" width="18" height="16" viewBox="0 0 18 16"><path d="M2 8V4.5a3.5 3.5 0 0 1 7 0" fill="none" stroke="#c0c0c0" stroke-width="2"/><rect x="6" y="8" width="12" height="8" fill="#b8b8b8"/></svg>
<svg class="a" style="left:1892px;top:1055px" width="19" height="22" viewBox="0 0 19 22"><rect x="4" y="0.5" width="11" height="8" rx="2" fill="none" stroke="#9a9a9a" stroke-width="1.3"/><circle cx="9.5" cy="4" r="1.2" fill="#9a9a9a"/><path d="M2 9H17M4 9V16Q9.5 21 15 16V9M6 13H13M3 20H16" fill="none" stroke="#9a9a9a" stroke-width="1.3"/></svg>
</body></html>
